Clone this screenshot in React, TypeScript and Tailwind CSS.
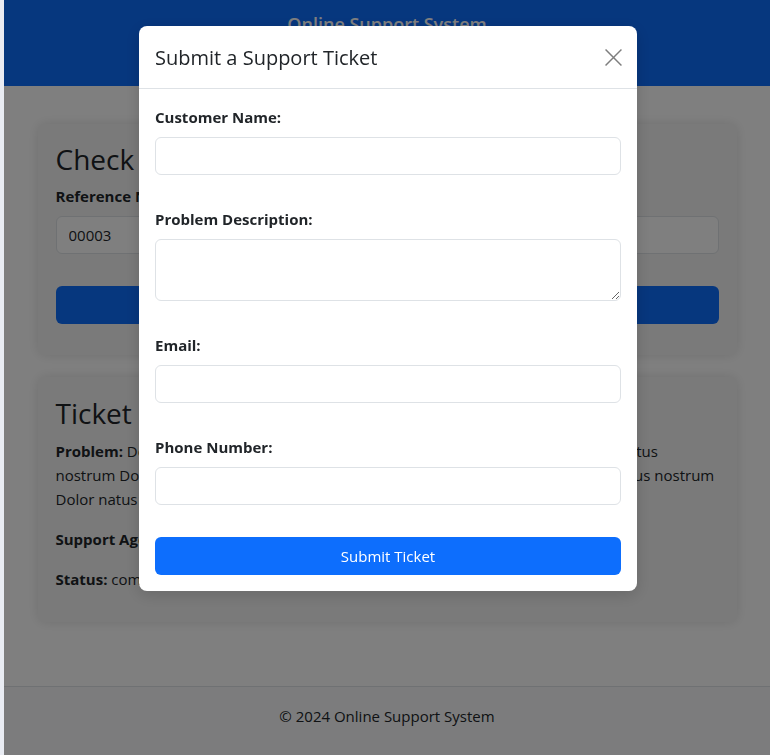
import React from "react";

const font = { fontFamily: '"Open Sans", "Noto Sans", sans-serif' };

function Field({ label, textarea }: { label: string; textarea?: boolean }) {
  return (
    <div className="mb-[32px]">
      <label className="block text-[15px] leading-[24px] font-bold text-[#212529] mb-[8px]">{label}</label>
      {textarea ? (
        <textarea
          rows={2}
          className="block w-full h-[62px] rounded-[6px] border border-[#dee2e6] bg-white px-[12px] py-[6px] text-[15px] leading-[24px] outline-none"
        />
      ) : (
        <input
          type="text"
          className="block w-full h-[38px] rounded-[6px] border border-[#dee2e6] bg-white px-[12px] py-[6px] text-[15px] leading-[24px] outline-none"
        />
      )}
    </div>
  );
}

export default function App() {
  return (
    <div className="h-[755px] w-[770px] flex overflow-hidden text-[#212529]" style={font}>
      <div className="w-[4px] bg-[#e9ecf3] shrink-0" />
      <div className="flex-1 flex flex-col bg-white">
        <header className="h-[86px] bg-[#0d6efd] text-white text-center pt-[10px]">
          <h1 className="text-[18px] leading-[28px] font-semibold">Online Support System</h1>
        </header>
        <main className="flex-1 pt-[38px]">
          <div className="w-[699px] mx-auto">
            <section className="bg-[#f5f5f5] rounded-[8px] shadow-[0_0_12px_rgba(0,0,0,0.12)] px-[18px] pt-[18px] pb-[31px] mb-[22px]">
              <h2 className="text-[28px] leading-[34px] font-medium mb-[8px]">Check Ticket Status</h2>
              <label className="block text-[15px] leading-[24px] font-bold mb-[8px]">Reference Number:</label>
              <input
                type="text"
                defaultValue="00003"
                className="block w-full h-[38px] rounded-[6px] border border-[#dee2e6] bg-white px-[12px] text-[15px] outline-none mb-[32px]"
              />
              <button className="w-full h-[38px] rounded-[6px] bg-[#0d6efd] text-white text-[15px]">Check Status</button>
            </section>
            <section className="bg-[#f5f5f5] rounded-[8px] shadow-[0_0_12px_rgba(0,0,0,0.12)] px-[18px] pt-[19px] pb-[15px]">
              <h2 className="text-[28px] leading-[34px] font-medium mb-[9px]">Ticket Details</h2>
              <p className="text-[15px] leading-[24px] mb-[16px]">
                <strong>Problem:</strong> Dolor natus nostrum Dolor natus nostrum Dolor natus nostrum Dolor natus nostrum Dolor
                natus nostrum Dolor natus nostrum Dolor natus nostrum Dolor natus nostrum Dolor natus nostrum
              </p>
              <p className="text-[15px] leading-[24px] mb-[16px]">
                <strong>Support Agent:</strong> John Doe
              </p>
              <p className="text-[15px] leading-[24px] mb-[16px]">
                <strong>Status:</strong> completed
              </p>
            </section>
          </div>
        </main>
        <footer className="h-[69px] border-t border-[#dee2e6] bg-[#f8f9fa] text-center pt-[17px]">
          <p className="text-[15px] leading-[24px]">© 2024 Online Support System</p>
        </footer>
      </div>

      <div className="fixed top-0 bottom-0 left-[4px] right-0 bg-black/50" />

      <div className="fixed top-[26px] left-[139px] w-[498px] bg-white rounded-[8px] shadow-[0_4px_16px_rgba(0,0,0,0.15)]">
        <div className="flex items-center justify-between px-[16px] h-[63px] border-b border-[#dee2e6]">
          <h5 className="text-[20px] leading-[30px] font-medium text-[#212529] translate-y-[1px]">Submit a Support Ticket</h5>
          <button aria-label="Close" className="w-[32px] h-[32px] flex items-center justify-center opacity-50 mr-[-8px]">
            <svg width="17" height="17" viewBox="0 0 16 16" fill="none" stroke="#000" strokeWidth="1.4" strokeLinecap="square">
              <path d="M1 1 15 15M15 1 1 15" />
            </svg>
          </button>
        </div>
        <div className="px-[16px] pt-[16px] pb-[16px]">
          <Field label="Customer Name:" />
          <Field label="Problem Description:" textarea />
          <Field label="Email:" />
          <Field label="Phone Number:" />
          <button className="w-full h-[38px] rounded-[6px] bg-[#0d6efd] text-white text-[15px] leading-[24px]">Submit Ticket</button>
        </div>
      </div>
    </div>
  );
}
